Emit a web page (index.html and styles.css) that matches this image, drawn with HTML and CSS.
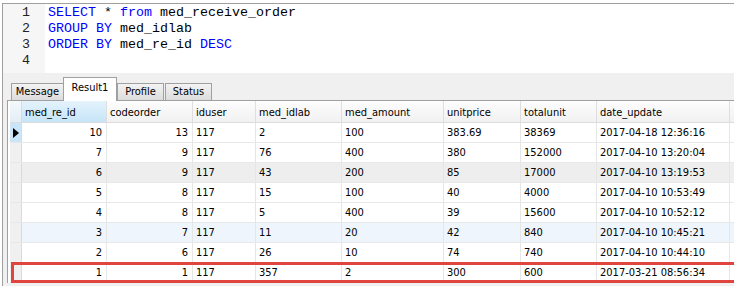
FILE: index.html
```html
<!DOCTYPE html>
<html lang="en">
<head>
    <meta charset="UTF-8">
    <title>Query Result</title>
    <link rel="stylesheet" href="styles.css">
</head>
<body>
    <div class="app">
        <!-- SQL editor -->
        <div class="editor">
            <div class="gutter">
                <div>1</div>
                <div>2</div>
                <div>3</div>
                <div>4</div>
            </div>
<pre class="code"><span class="kw">SELECT</span> * <span class="kw">from</span> med_receive_order
<span class="kw">GROUP BY</span> med_idlab
<span class="kw">ORDER BY</span> med_re_id <span class="kw">DESC</span>
</pre>
        </div>

        <!-- Result panel -->
        <div class="results">
            <div class="tabs">
                <div class="tab tab-message">Message</div>
                <div class="tab tab-result active">Result1</div>
                <div class="tab tab-profile">Profile</div>
                <div class="tab tab-status">Status</div>
            </div>

            <div class="grid">
                <div class="row head">
                    <div class="cell ind"></div>
                    <div class="cell sel">med_re_id</div>
                    <div class="cell">codeorder</div>
                    <div class="cell">iduser</div>
                    <div class="cell">med_idlab</div>
                    <div class="cell">med_amount</div>
                    <div class="cell">unitprice</div>
                    <div class="cell">totalunit</div>
                    <div class="cell">date_update</div>
                </div>
                <div class="row">
                    <div class="cell ind current"><span class="arrow"></span></div>
                    <div class="cell num">10</div>
                    <div class="cell num">13</div>
                    <div class="cell">117</div>
                    <div class="cell">2</div>
                    <div class="cell">100</div>
                    <div class="cell">383.69</div>
                    <div class="cell">38369</div>
                    <div class="cell">2017-04-18 12:36:16</div>
                </div>
                <div class="row">
                    <div class="cell ind"></div>
                    <div class="cell num">7</div>
                    <div class="cell num">9</div>
                    <div class="cell">117</div>
                    <div class="cell">76</div>
                    <div class="cell">400</div>
                    <div class="cell">380</div>
                    <div class="cell">152000</div>
                    <div class="cell">2017-04-10 13:20:04</div>
                </div>
                <div class="row grey">
                    <div class="cell ind"></div>
                    <div class="cell num">6</div>
                    <div class="cell num">9</div>
                    <div class="cell">117</div>
                    <div class="cell">43</div>
                    <div class="cell">200</div>
                    <div class="cell">85</div>
                    <div class="cell">17000</div>
                    <div class="cell">2017-04-10 13:19:53</div>
                </div>
                <div class="row">
                    <div class="cell ind"></div>
                    <div class="cell num">5</div>
                    <div class="cell num">8</div>
                    <div class="cell">117</div>
                    <div class="cell">15</div>
                    <div class="cell">100</div>
                    <div class="cell">40</div>
                    <div class="cell">4000</div>
                    <div class="cell">2017-04-10 10:53:49</div>
                </div>
                <div class="row">
                    <div class="cell ind"></div>
                    <div class="cell num">4</div>
                    <div class="cell num">8</div>
                    <div class="cell">117</div>
                    <div class="cell">5</div>
                    <div class="cell">400</div>
                    <div class="cell">39</div>
                    <div class="cell">15600</div>
                    <div class="cell">2017-04-10 10:52:12</div>
                </div>
                <div class="row blue">
                    <div class="cell ind"></div>
                    <div class="cell num">3</div>
                    <div class="cell num">7</div>
                    <div class="cell">117</div>
                    <div class="cell">11</div>
                    <div class="cell">20</div>
                    <div class="cell">42</div>
                    <div class="cell">840</div>
                    <div class="cell">2017-04-10 10:45:21</div>
                </div>
                <div class="row">
                    <div class="cell ind"></div>
                    <div class="cell num">2</div>
                    <div class="cell num">6</div>
                    <div class="cell">117</div>
                    <div class="cell">26</div>
                    <div class="cell">10</div>
                    <div class="cell">74</div>
                    <div class="cell">740</div>
                    <div class="cell">2017-04-10 10:44:10</div>
                </div>
                <div class="row marked">
                    <div class="cell ind"></div>
                    <div class="cell num">1</div>
                    <div class="cell num">1</div>
                    <div class="cell">117</div>
                    <div class="cell">357</div>
                    <div class="cell">2</div>
                    <div class="cell">300</div>
                    <div class="cell">600</div>
                    <div class="cell">2017-03-21 08:56:34</div>
                </div>
            </div>
        </div>
    </div>
</body>
</html>
```

FILE: styles.css
```css
body {
    margin: 0;
    background-color: #fff;
    font-family: "DejaVu Sans Condensed", "Liberation Sans", Arial, sans-serif;
    color: #000;
}

.app {
    margin: 3px 0 0 2px;
    border-left: 1px solid #a0a0a0;
    border-top: 1px solid #a0a0a0;
}

/* editor */
.editor {
    display: flex;
    height: 69px;
    background-color: #fff;
}

.gutter {
    width: 42px;
    box-sizing: border-box;
    padding: 1px 15px 0 0;
    background-color: #f6f6f6;
    text-align: right;
    font-family: "Liberation Mono", monospace;
    font-size: 13.33px;
    line-height: 16px;
    color: #222;
}

.code {
    margin: 0;
    padding: 1px 0 0 3px;
    font-family: "Liberation Mono", monospace;
    font-size: 13.33px;
    line-height: 16px;
    color: #000;
}

.kw {
    color: #0000ff;
}

/* result panel */
.results {
    background-color: #f0f0f0;
    padding-bottom: 3px;
}

.tabs {
    display: flex;
    align-items: flex-end;
    height: 27px;
    padding-left: 8px;
}

.tab {
    box-sizing: border-box;
    height: 17px;
    border: 1px solid #a0a0a0;
    border-bottom: none;
    background: linear-gradient(#f3f3f3, #dcdcdc);
    font-size: 11px;
    line-height: 16px;
    text-align: center;
    color: #000;
}

.tab-message {
    width: 53px;
}

.tab-result {
    width: 54px;
}

.tab-profile {
    width: 47px;
    margin-left: 1px;
}

.tab-status {
    width: 47px;
    margin-left: 1px;
}

.tab.active {
    height: 24px;
    margin: 0 -1px -1px -1px;
    line-height: 20px;
    background: #fff;
    position: relative;
    z-index: 1;
}

/* data grid */
.grid {
    margin-left: 4px;
    padding-left: 2px;
    border-left: 1px solid #a0a0a0;
    border-top: 1px solid #a0a0a0;
    background-color: #fff;
}

.row {
    display: grid;
    grid-template-columns: 12px 85px 86px 63px 86px 102px 77px 76px 133px;
    height: 20px;
    box-sizing: border-box;
    border-bottom: 1px solid #e8e8e8;
    font-size: 11px;
    line-height: 19px;
}

.row.head {
    height: 22px;
    line-height: 19px;
    background: linear-gradient(#fdfdfd, #f1f1f1);
    border-bottom: 1px solid #dcdcdc;
}

.head .cell {
    padding-top: 2px;
    border-right-color: #dedede;
}

.cell {
    box-sizing: border-box;
    padding: 0 3px;
    border-right: 1px solid #e6e6e6;
    white-space: nowrap;
    overflow: hidden;
}

.cell.num {
    text-align: right;
    padding-right: 4px;
}

.head .sel {
    background: linear-gradient(#e4f3fc, #c6e5f8);
}

.cell.ind {
    padding: 0;
    background-color: #f0f0f0;
    border-right-color: #dadada;
}

.head .ind {
    background: linear-gradient(#f4f8fb, #e4eef6);
}

.cell.ind.current {
    background-color: #c9e5f7;
    position: relative;
}

.arrow {
    position: absolute;
    left: 3px;
    top: 5px;
    border-top: 5px solid transparent;
    border-bottom: 5px solid transparent;
    border-left: 6px solid #000;
}

.row.grey {
    background-color: #eeeeee;
}

.row.blue {
    background-color: #eef5fd;
}

.row.marked {
    position: relative;
}

.row.marked::after {
    content: "";
    position: absolute;
    top: -1px;
    bottom: -1px;
    left: 1px;
    right: -3px;
    border: 3px solid #e0443f;
}
```
